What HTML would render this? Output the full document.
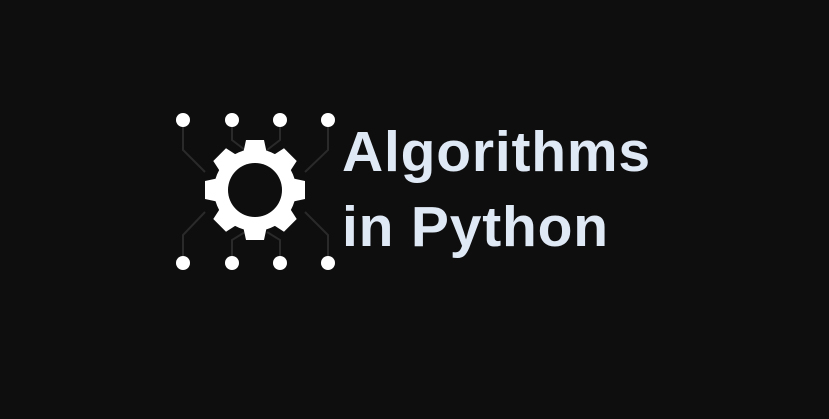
<!DOCTYPE html>
<html><head><style>
html,body{margin:0;padding:0;width:829px;height:419px;background:#0e0e0e;overflow:hidden}
.t{position:absolute;left:342px;font-family:"Liberation Sans",sans-serif;font-weight:bold;font-size:57px;color:#dfe8f5;letter-spacing:0.8px;white-space:nowrap;line-height:1}
</style></head><body>
<svg width="829" height="419" style="position:absolute;left:0;top:0">
<g stroke="#2a2a2a" stroke-width="2" fill="none">
<path d="M183 120 V150 L205 172 M232 120 V140 L245 150 M280 120 V140 L267 150 M328 120 V150 L305 172"/>
<path d="M183 263 V235 L205 212 M232 263 V240 L245 232 M280 263 V240 L267 232 M328 263 V235 L305 212"/>
</g>
<g fill="#fff">
<circle cx="183" cy="120" r="7"/><circle cx="232" cy="120" r="7"/><circle cx="280" cy="120" r="7"/><circle cx="328" cy="120" r="7"/>
<circle cx="183" cy="263" r="7"/><circle cx="232" cy="263" r="7"/><circle cx="280" cy="263" r="7"/><circle cx="328" cy="263" r="7"/>
<g transform="translate(255,190)">
<circle r="41"/>
<g id="tt"><path d="M-12 -36 L-9 -50 H9 L12 -36 Z"/></g>
<use href="#tt" transform="rotate(45)"/>
<use href="#tt" transform="rotate(90)"/>
<use href="#tt" transform="rotate(135)"/>
<use href="#tt" transform="rotate(180)"/>
<use href="#tt" transform="rotate(225)"/>
<use href="#tt" transform="rotate(270)"/>
<use href="#tt" transform="rotate(315)"/>
<circle r="27" fill="#0e0e0e"/>
</g>
</g>
</svg>
<div class="t" style="top:124px">Algorithms</div>
<div class="t" style="top:199px">in Python</div>
</body></html>
